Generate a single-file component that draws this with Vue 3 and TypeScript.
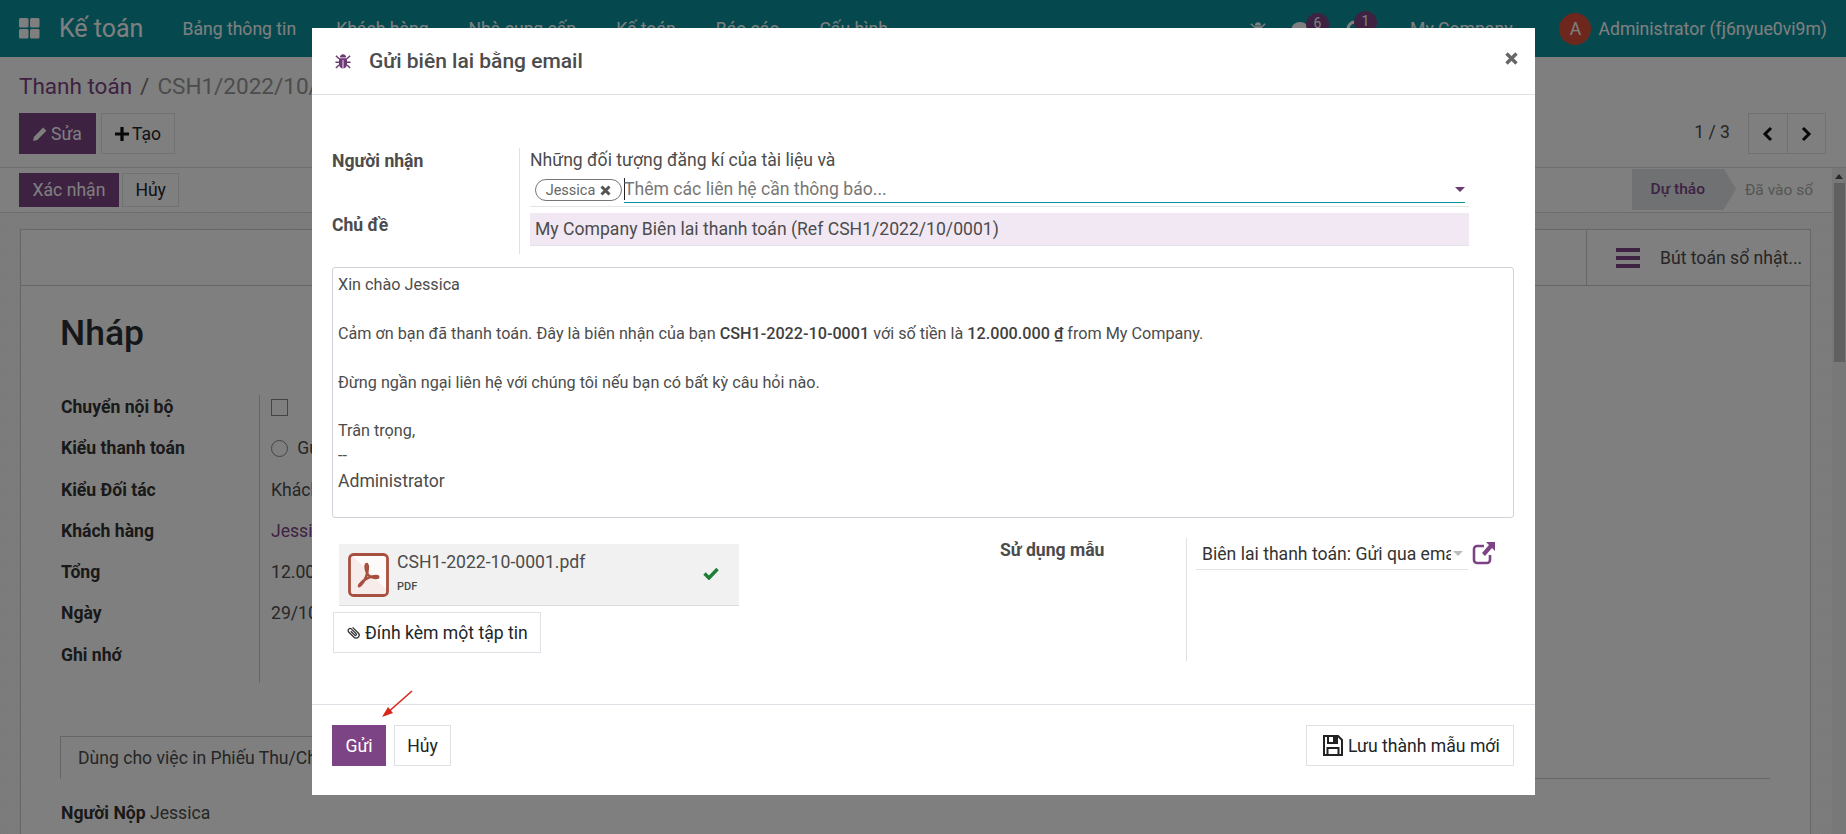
<script setup lang="ts">
const navItems: string[] = ['Bảng thông tin', 'Khách hàng', 'Nhà cung cấp', 'Kế toán', 'Báo cáo', 'Cấu hình']
const bgFields: { label: string; value: string; kind?: string }[] = [
  { label: 'Chuyển nội bộ', value: '', kind: 'is-check' },
  { label: 'Kiểu thanh toán', value: 'Gửi tiền', kind: 'is-radio' },
  { label: 'Kiểu Đối tác', value: 'Khách hàng' },
  { label: 'Khách hàng', value: 'Jessica', kind: 'is-link' },
  { label: 'Tổng', value: '12.000.000 ₫' },
  { label: 'Ngày', value: '29/10/2022' },
  { label: 'Ghi nhớ', value: '' }
]
</script>

<template>
  <div class="app">
    <header class="nav">
      <svg class="apps" width="21" height="21" viewBox="0 0 21 21"><rect x="0" y="0" width="9.500" height="9.500" rx="1.500"/><rect x="11" y="0" width="9.500" height="9.500" rx="1.500"/><rect x="0" y="11" width="9.500" height="9.500" rx="1.500"/><rect x="11" y="11" width="9.500" height="9.500" rx="1.500"/></svg>
      <span class="brand">Kế toán</span>
      <span v-for="n in navItems" :key="n" class="nav-item">{{ n }}</span>
      <span class="nav-right">
        <svg class="nav-ic" width="16" height="18" viewBox="0 0 18 20"><use href="#bug"/></svg>
        <span class="sys chat"><svg width="18" height="16" viewBox="0 0 18 16"><ellipse cx="9" cy="8" rx="8.500" ry="7" fill="#fff"/></svg><b class="badge">6</b></span>
        <span class="sys act"><svg width="18" height="18" viewBox="0 0 18 18"><circle cx="9" cy="9" r="7" fill="none" stroke="#fff" stroke-width="3"/></svg><b class="badge">1</b></span>
        <span class="company">My Company</span>
        <span class="avatar">A</span>
        <span class="user">Administrator (fj6nyue0vi9m)</span>
      </span>
    </header>

    <section class="cp">
      <div class="crumbs"><span class="crumb-a">Thanh toán</span><span class="crumb-s">/</span><span class="crumb-c">CSH1/2022/10/0001</span></div>
      <div class="cp-row">
        <button class="btn primary">
          <svg width="15" height="15" viewBox="0 0 14 14"><path d="M0 14l1-4L9.500 1.500l3 3L4 13z" fill="#fff"/></svg>Sửa
        </button>
        <button class="btn">
          <svg width="14" height="14" viewBox="0 0 13 13"><path d="M5 0h3v5h5v3H8v5H5V8H0V5h5z" fill="#111"/></svg>Tạo
        </button>
        <span class="pager">1 / 3</span>
        <span class="pager-btns">
          <i><svg width="12" height="16" viewBox="0 0 12 16"><path d="M9 2L3 8l6 6" fill="none" stroke="#111" stroke-width="3"/></svg></i>
          <i><svg width="12" height="16" viewBox="0 0 12 16"><path d="M3 2l6 6-6 6" fill="none" stroke="#111" stroke-width="3"/></svg></i>
        </span>
      </div>
    </section>

    <div class="lower">
      <div class="page">
        <section class="statusbar">
          <button class="btn primary small">Xác nhận</button>
          <button class="btn small">Hủy</button>
          <span class="status-right">
            <span class="st-active">Dự thảo</span>
            <span class="st-next">Đã vào sổ</span>
          </span>
        </section>
        <section class="sheet-wrap">
          <div class="sheet">
            <div class="stat-row">
              <div class="stat">
                <svg width="24" height="20" viewBox="0 0 24 20"><path d="M0 0h24v4H0zM0 8h24v4H0zM0 16h24v4H0z" fill="#7d4485"/></svg>
                <span>Bút toán sổ nhật...</span>
              </div>
            </div>
            <div class="sheet-body">
              <h1 class="draft">Nháp</h1>
              <div class="bg-fields">
                <template v-for="f in bgFields" :key="f.label">
                  <div class="bg-label">{{ f.label }}</div>
                  <div class="bg-val" :class="f.kind">
                    <span v-if="f.kind === 'is-check'" class="box"></span>
                    <span v-if="f.kind === 'is-radio'" class="round"></span>
                    {{ f.value }}
                  </div>
                </template>
              </div>
              <div class="tab-line"><span class="tab">Dùng cho việc in Phiếu Thu/Chi</span></div>
              <div class="payer"><b>Người Nộp</b> Jessica</div>
            </div>
          </div>
        </section>
      </div>
      <div class="scrollbar"><span class="up"></span><span class="thumb"></span></div>
    </div>

    <div class="overlay"></div>

    <div class="modal">
      <header class="m-head">
        <svg class="bug" width="16" height="18" viewBox="0 0 18 20"><use href="#bug"/></svg>
        <h4>Gửi biên lai bằng email</h4>
        <svg class="close" width="13" height="13" viewBox="0 0 13 13"><path d="M1.500 1.500l10 10M11.500 1.500l-10 10" stroke="#666" stroke-width="3.400" fill="none"/></svg>
      </header>

      <div class="m-body">
        <div class="top-group">
          <div class="lab lab1">Người nhận</div>
          <div class="f-col">
            <div class="followers">Những đối tượng đăng kí của tài liệu và</div>
            <div class="many2many">
              <span class="tag">Jessica
                <svg width="11" height="11" viewBox="0 0 11 11"><path d="M1.500 1.500l8 8M9.500 1.500l-8 8" stroke="#555" stroke-width="3" fill="none"/></svg>
              </span>
              <span class="input">
                <span class="cursor"></span>Thêm các liên hệ cần thông báo...
                <span class="caret purple"></span>
              </span>
            </div>
          </div>
          <div class="lab lab2">Chủ đề</div>
          <div class="subject-col"><div class="subject">My Company Biên lai thanh toán (Ref CSH1/2022/10/0001)</div></div>
        </div>

        <div class="editor">
          <p>Xin chào Jessica</p>
          <p><br></p>
          <p>Cảm ơn bạn đã thanh toán. Đây là biên nhận của bạn <b>CSH1-2022-10-0001</b> với số tiền là <b>12.000.000 ₫</b> from My Company.</p>
          <p><br></p>
          <p>Đừng ngần ngại liên hệ với chúng tôi nếu bạn có bất kỳ câu hỏi nào.</p>
          <p><br></p>
          <p>Trân trọng,</p>
          <p>--</p>
          <p class="sig">Administrator</p>
        </div>

        <div class="bottom">
          <div class="att-col">
            <div class="att">
              <svg class="pdf" width="41" height="44" viewBox="0 0 41 44">
                <rect x="1.500" y="1.500" width="38" height="41" rx="4" fill="#f8ecea"/>
                <path d="M5 3h31a3 3 0 0 1 2 2v31z" fill="#fdfafa"/>
                <rect x="1.500" y="1.500" width="38" height="41" rx="4" fill="none" stroke="#a8503f" stroke-width="2.800"/>
                <path d="M19 11c-2 0-2 4 0 9 2 4 5 5 9 5 3 0 3-2 0-2-5 0-12 3-16 8-2 3-1 3 1 1 4-4 7-12 7-18 0-2-1-3-1-3z" fill="none" stroke="#a8503f" stroke-width="2.400"/>
              </svg>
              <div class="att-text">
                <div class="att-name">CSH1-2022-10-0001.pdf</div>
                <div class="att-ext">PDF</div>
              </div>
              <svg class="ok" width="16" height="13" viewBox="0 0 16 13"><path d="M1.500 6.500l4.500 4.500 8.500-9" fill="none" stroke="#1d7f35" stroke-width="3.400"/></svg>
            </div>
            <button class="btn attach">
              <svg width="16" height="18" viewBox="-3 -1 16 18"><path d="M8 3v8a3 3 0 0 1-6 0V3.500a2 2 0 0 1 4 0V10a1 1 0 0 1-2 0V4.500" transform="rotate(-45 5 8)" fill="none" stroke="#333" stroke-width="1.300"/></svg>
              Đính kèm một tập tin
            </button>
          </div>
          <div class="lab tpl-lab">Sử dụng mẫu</div>
          <div class="tpl-col">
            <div class="tpl">
              <span class="tpl-sel"><span class="tpl-text">Biên lai thanh toán: Gửi qua email</span><span class="caret grey"></span></span>
              <svg class="ext" width="24" height="24" viewBox="0 0 24 24">
                <path d="M12 5H5a3 3 0 0 0-3 3v11a3 3 0 0 0 3 3h10a3 3 0 0 0 3-3v-5" fill="none" stroke="#7d4485" stroke-width="2.600"/>
                <path d="M14 1h9v9l-3-3-7 8-3-3 7-8z" fill="#7d4485"/>
              </svg>
            </div>
          </div>
        </div>
      </div>

      <footer class="m-foot">
        <button class="btn primary send">Gửi</button>
        <button class="btn cancel">Hủy</button>
        <button class="btn save">
          <svg width="20" height="21" viewBox="0 0 20 21"><path d="M1 1h14l4 4v15H1z" fill="none" stroke="#222" stroke-width="2"/><path d="M5 1h9v7H5z" fill="#fff" stroke="#222" stroke-width="2"/><rect x="10" y="2" width="3" height="5" fill="#222"/><path d="M4.500 20v-7h11v7" fill="none" stroke="#222" stroke-width="2"/></svg>
          Lưu thành mẫu mới
        </button>
      </footer>

      <svg class="arrow" width="34" height="30" viewBox="0 0 34 30">
        <path d="M32 1L6 24" stroke="#d9261c" stroke-width="1.600" fill="none"/>
        <path d="M2 27l11-4-5-6z" fill="#d9261c"/>
      </svg>
    </div>

    <svg width="0" height="0" class="defs">
      <defs>
        <g id="bug">
          <path d="M5.500 6c0-2 1.500-3.500 3.500-3.500s3.500 1.500 3.500 3.500z" fill="currentColor"/>
          <path d="M4.500 7h9v7c0 2.500-2 4.500-4.500 4.500S4.500 16.500 4.500 14z" fill="currentColor"/>
          <path d="M9 9v9.500" stroke="#fff" stroke-width="1"/>
          <path d="M1 4l3.500 3.500M17 4l-3.500 3.500M.5 11.500h4M17.500 11.500h-4M1 18l3.500-3.500M17 18l-3.500-3.500" stroke="currentColor" stroke-width="1.600" fill="none"/>
        </g>
      </defs>
    </svg>
  </div>
</template>

<style scoped>
.app {
  position: relative;
  width: 1846px;
  height: 834px;
  overflow: hidden;
  display: flex;
  flex-direction: column;
  font-family: Roboto, "Noto Sans", sans-serif;
  font-size: 17.600px;
  color: #4c4c4c;
  background: #fff;
}
.defs { position: absolute; }
button { font-family: inherit; }

/* nav */
.nav {
  height: 57px;
  flex: none;
  background: #0a939e;
  color: #fff;
  display: flex;
  align-items: center;
  padding-left: 19px;
  font-size: 17.600px;
}
.apps { fill: #fff; flex: none; }
.brand { font-size: 25px; margin: 0 39px 0 19px; }
.nav-item { margin-right: 40px; }
.nav-right { margin-left: auto; display: flex; align-items: center; padding-right: 19px; }
.nav-ic { color: #fff; margin-right: 25px; }
.sys { position: relative; display: inline-flex; }
.chat { margin-right: 37px; }
.act { margin-right: 46px; }
.badge {
  position: absolute;
  left: 15px;
  top: -8px;
  width: 23px;
  height: 23px;
  border-radius: 50%;
  background: #7d4485;
  font-size: 14px;
  font-weight: 400;
  line-height: 21px;
  text-align: center;
}
.act .badge { left: 8px; top: -9px; }
.company { margin-right: 47px; }
.avatar {
  width: 32px;
  height: 32px;
  border-radius: 50%;
  background: #dd4f3a;
  text-align: center;
  line-height: 32px;
  margin-right: 7px;
}

/* background page */
.cp { height: 111px; flex: none; padding: 15px 20px 0 19px; border-bottom: 1px solid #ddd; box-sizing: border-box; }
.crumbs { font-size: 22.500px; line-height: 28px; height: 41px; }
.crumb-a { color: #7d4485; }
.crumb-s { margin: 0 8px; color: #777; }
.crumb-c { color: #999; }
.cp-row { display: flex; align-items: flex-start; gap: 5px; }
.btn {
  height: 41px;
  padding: 0 13px;
  border: 1px solid #dee2e6;
  background: #fff;
  color: #212529;
  font-size: 17.600px;
  display: inline-flex;
  align-items: center;
  gap: 3px;
  box-sizing: border-box;
}
.btn.primary { background: #7d4485; border-color: #7d4485; color: #fff; }
.btn.small { height: 34px; padding: 0 12.500px; }
.pager { margin-left: auto; margin-right: 13px; line-height: 38px; color: #4c4c4c; }
.pager-btns { display: flex; border: 1px solid #dee2e6; height: 41px; box-sizing: border-box; }
.pager-btns i { width: 37.500px; display: flex; align-items: center; justify-content: center; }
.pager-btns i + i { border-left: 1px solid #dee2e6; }
.lower { flex: 1; min-height: 0; display: flex; }
.page { flex: 1; min-width: 0; display: flex; flex-direction: column; }
.statusbar {
  flex: none;
  height: 45px;
  padding: 5px 19px 0 19px;
  border-bottom: 1px solid #ddd;
  display: flex;
  align-items: flex-start;
  gap: 3px;
  box-sizing: border-box;
}
.status-right { margin-left: auto; display: flex; align-items: center; margin-top: -4px; font-size: 15.500px; }
.st-active {
  background: #dee2e6;
  color: #7d4485;
  font-weight: 500;
  height: 41px;
  line-height: 41px;
  padding: 0 19px;
  position: relative;
  margin-right: 21px;
}
.st-active::after {
  content: "";
  position: absolute;
  left: 100%;
  top: 0;
  border-left: 12px solid #dee2e6;
  border-top: 20.500px solid transparent;
  border-bottom: 20.500px solid transparent;
}
.st-next { color: #aaa; }
.sheet-wrap {
  flex: 1;
  min-height: 0;
  padding: 16px 21px 0 20px;
  background: repeating-conic-gradient(#f4f4f4 0 25%, #fafafa 0 50%) 0 0 / 3px 3px;
}
.sheet { background: #fff; border: 1px solid #ccc; border-bottom: 0; height: 100%; box-sizing: border-box; }
.stat-row { height: 55px; border-bottom: 1px solid #ccc; display: flex; justify-content: flex-end; }
.stat {
  width: 224px;
  border-left: 1px solid #ccc;
  display: flex;
  align-items: center;
  gap: 20px;
  padding-left: 29px;
  box-sizing: border-box;
}
.sheet-body { padding: 23px 40px 0; }
.draft { margin: 0; font-size: 35.500px; line-height: 48px; font-weight: 500; color: #2a2f33; margin-left: -1px; }
.bg-fields {
  margin-top: 31px;
  display: grid;
  grid-template-columns: 210px 1fr;
  grid-auto-rows: 41.300px;
  line-height: 38px;
  position: relative;
}
.bg-fields::before { content: ""; position: absolute; left: 198px; top: 7px; bottom: -6px; border-left: 1px solid #ccc; }
.bg-label { font-weight: 700; color: #333; }
.bg-val { color: #4c4c4c; white-space: nowrap; }
.bg-val.is-link { color: #7d4485; }
.box { display: inline-block; width: 15px; height: 15px; border: 1px solid #888; vertical-align: -3px; }
.round { display: inline-block; width: 15px; height: 15px; border: 1px solid #888; border-radius: 50%; vertical-align: -3px; margin-right: 5px; }
.tab-line { margin: 59px 0 0 -1px; border-bottom: 1px solid #ccc; height: 43px; box-sizing: border-box; }
.tab { display: inline-block; height: 43px; line-height: 42px; padding: 0 17px; border: 1px solid #ccc; border-bottom: 0; box-sizing: border-box; background: #fff; }
.payer { margin-top: 22px; line-height: 24px; }
.payer b { font-weight: 700; color: #333; }
.scrollbar { width: 14px; flex: none; background: #f1f1f1; display: flex; flex-direction: column; align-items: center; box-sizing: border-box; }
.up { border-bottom: 5px solid #505050; border-left: 4px solid transparent; border-right: 4px solid transparent; margin: 6px 0 4px; }
.thumb { width: 11px; height: 179px; background: #c1c1c1; }

.overlay { position: absolute; inset: 0; background: rgba(0, 0, 0, .5); }

/* modal */
.modal {
  position: absolute;
  left: 312px;
  top: 28px;
  width: 1223px;
  height: 767px;
  background: #fff;
  display: flex;
  flex-direction: column;
  color: #4c4c4c;
}
.m-head {
  height: 67px;
  flex: none;
  border-bottom: 1px solid #dee2e6;
  box-sizing: border-box;
  display: flex;
  align-items: center;
  padding: 0 17px 0 23px;
}
.bug { color: #6d3a76; margin-right: 18px; flex: none; }
.m-head h4 { margin: 0; font-size: 21px; font-weight: 500; color: #4c4c4c; }
.close { margin-left: auto; margin-top: -6px; }
.m-body { flex: 1; min-height: 0; padding: 53px 21px 0 20px; display: flex; flex-direction: column; }
.top-group {
  display: grid;
  grid-template-columns: 187px 950px;
  grid-template-rows: 59px 47px;
  height: 106px;
}
.lab { font-weight: 700; color: #4c4c4c; }
.lab1 { padding-top: 1px; line-height: 24px; }
.lab2 { margin-top: 6px; line-height: 24px; }
.f-col, .subject-col { border-left: 1px solid #dee2e6; padding-left: 10px; }
.followers { height: 24px; line-height: 24px; }
.many2many { display: flex; align-items: flex-end; height: 35px; border-bottom: 1px solid #e2e5e8; padding: 0 0 3px 5px; box-sizing: border-box; }
.tag {
  height: 22px;
  width: 87px;
  flex: none;
  box-sizing: border-box;
  border: 1px solid #777;
  border-radius: 12px;
  font-size: 14.500px;
  color: #666;
  display: flex;
  align-items: center;
  justify-content: center;
  gap: 5px;
  margin-bottom: 2px;
}
.input {
  flex: 1;
  margin-left: 2px;
  height: 27px;
  line-height: 26px;
  border-bottom: 1px solid #0a939e;
  color: #777;
  display: flex;
  align-items: flex-start;
  box-sizing: border-box;
  margin-right: 4px;
  position: relative;
}
.cursor { width: 1px; height: 22px; background: #222; margin-right: -1px; margin-top: 2px; }
.caret { width: 0; height: 0; border-left: 5px solid transparent; border-right: 5px solid transparent; border-top: 5px solid; }
.caret.purple { border-top-color: #6d3a76; position: absolute; right: 0; top: 11px; }
.caret.grey { border-top-color: #bbb; flex: none; margin-left: 2px; }
.subject {
  height: 33px;
  margin-top: 6px;
  background: #f1e8f3;
  padding-left: 5px;
  line-height: 33px;
  border-bottom: 1px solid #e4e4e8;
  box-sizing: border-box;
}
.editor {
  margin-top: 13px;
  height: 251px;
  box-sizing: border-box;
  border: 1px solid #ced4da;
  border-radius: 3px;
  padding: 5px;
  font-size: 16.200px;
  line-height: 24.400px;
}
.editor p { margin: 0; }
.editor b { font-weight: 500; color: #3f3f3f; }
.editor .sig { font-size: 17.600px; line-height: 27px; }
.bottom {
  margin-top: 20px;
  display: grid;
  grid-template-columns: 668px 186px 1fr;
  height: 123px;
}
.att-col { display: flex; flex-direction: column; align-items: flex-start; padding-top: 6px; }
.att {
  margin-left: 7px;
  width: 400px;
  height: 62px;
  box-sizing: border-box;
  background: #f1f1f1;
  border-bottom: 1px solid #ddd;
  display: flex;
  align-items: center;
  padding-left: 9px;
}
.att-text { margin-left: 8px; flex: 1; }
.att-name { line-height: 24px; margin-top: -5px; }
.att-ext { font-size: 11px; font-weight: 500; line-height: 16px; margin-top: 5px; }
.ok { margin-right: 20px; margin-top: -3px; }
.attach { margin: 6px 0 0 1px; width: 208px; height: 41px; padding: 0 0 0 12px; gap: 3px; }
.tpl-lab { line-height: 24px; }
.tpl-col { border-left: 1px solid #dee2e6; padding-left: 9px; }
.tpl { display: flex; align-items: flex-start; }
.tpl-sel {
  width: 272px;
  height: 32px;
  box-sizing: border-box;
  border-bottom: 1px solid #e2e5e8;
  padding-left: 6px;
  display: flex;
  align-items: center;
  color: #333;
}
.tpl-text { width: 249px; overflow: hidden; white-space: nowrap; }
.ext { margin: 3px 0 0 4px; }
.m-foot {
  height: 91px;
  flex: none;
  border-top: 1px solid #dee2e6;
  box-sizing: border-box;
  display: flex;
  align-items: flex-start;
  padding: 20px 21px 0 20px;
  gap: 8px;
}
.send { width: 54px; justify-content: center; padding: 0; }
.cancel { width: 57px; justify-content: center; padding: 0; }
.save { margin-left: auto; width: 208px; padding: 0 0 0 16px; gap: 5px; }
.arrow { position: absolute; left: 68px; top: 662px; }
</style>
